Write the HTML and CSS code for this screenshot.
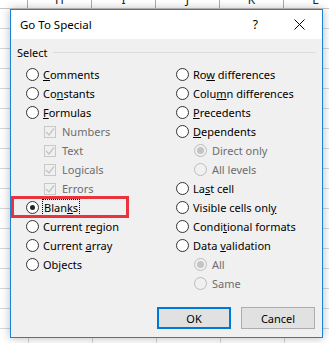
FILE: index.html
```html
<!DOCTYPE html>
<html lang="en">
<head>
    <meta charset="UTF-8">
    <title>Go To Special</title>
    <link rel="stylesheet" href="styles.css">
</head>
<body>
    <div class="sheet-head">
        <span>G</span><span>H</span><span>I</span><span>J</span><span>K</span><span>L</span>
    </div>
    <div class="dialog">
        <div class="titlebar">
            <span class="title">Go To Special</span>
            <span class="help">?</span>
            <svg class="close" width="11" height="11" viewBox="0 0 11 11"><path d="M0.5 0.5 L10.5 10.5 M10.5 0.5 L0.5 10.5" stroke="#000" stroke-width="1" fill="none"/></svg>
        </div>
        <div class="content">
            <div class="group-label"><span>Select</span><i></i></div>
            <div class="options">
                <div class="col">
                    <div class="opt"><b class="radio"></b><span><u>C</u>omments</span></div>
                    <div class="opt"><b class="radio"></b><span>Co<u>n</u>stants</span></div>
                    <div class="opt"><b class="radio"></b><span><u>F</u>ormulas</span></div>
                    <div class="opt sub off"><b class="check"><svg width="10" height="10" viewBox="0 0 10 10"><path d="M1 5 L4 8 L9 1.5" stroke="#c4c4c4" stroke-width="1.3" fill="none"/></svg></b><span>Numbers</span></div>
                    <div class="opt sub off"><b class="check"><svg width="10" height="10" viewBox="0 0 10 10"><path d="M1 5 L4 8 L9 1.5" stroke="#c4c4c4" stroke-width="1.3" fill="none"/></svg></b><span>Text</span></div>
                    <div class="opt sub off"><b class="check"><svg width="10" height="10" viewBox="0 0 10 10"><path d="M1 5 L4 8 L9 1.5" stroke="#c4c4c4" stroke-width="1.3" fill="none"/></svg></b><span>Logicals</span></div>
                    <div class="opt sub off"><b class="check"><svg width="10" height="10" viewBox="0 0 10 10"><path d="M1 5 L4 8 L9 1.5" stroke="#c4c4c4" stroke-width="1.3" fill="none"/></svg></b><span>Errors</span></div>
                    <div class="opt blanks"><b class="radio on"></b><span class="focus">Blan<u>k</u>s</span></div>
                    <div class="opt"><b class="radio"></b><span>Current <u>r</u>egion</span></div>
                    <div class="opt"><b class="radio"></b><span>Current <u>a</u>rray</span></div>
                    <div class="opt"><b class="radio"></b><span>Ob<u>j</u>ects</span></div>
                </div>
                <div class="col">
                    <div class="opt"><b class="radio"></b><span>Ro<u>w</u> differences</span></div>
                    <div class="opt"><b class="radio"></b><span>Colu<u>m</u>n differences</span></div>
                    <div class="opt"><b class="radio"></b><span><u>P</u>recedents</span></div>
                    <div class="opt"><b class="radio"></b><span><u>D</u>ependents</span></div>
                    <div class="opt sub off"><b class="radio on"></b><span>Direct only</span></div>
                    <div class="opt sub off"><b class="radio"></b><span>All levels</span></div>
                    <div class="opt"><b class="radio"></b><span>La<u>s</u>t cell</span></div>
                    <div class="opt"><b class="radio"></b><span>Visible cells onl<u>y</u></span></div>
                    <div class="opt"><b class="radio"></b><span>Condi<u>t</u>ional formats</span></div>
                    <div class="opt"><b class="radio"></b><span>Data <u>v</u>alidation</span></div>
                    <div class="opt sub off"><b class="radio on"></b><span>All</span></div>
                    <div class="opt sub off"><b class="radio"></b><span>Same</span></div>
                </div>
            </div>
            <div class="buttons">
                <button class="btn default">OK</button>
                <button class="btn">Cancel</button>
            </div>
        </div>
    </div>
</body>
</html>
```

FILE: styles.css
```css
body {
    margin: 0;
    width: 329px;
    height: 343px;
    overflow: hidden;
    font-family: "Noto Sans", "Liberation Sans", sans-serif;
    font-size: 11px;
    color: #000;
    background-color: #fff;
    background-image:
        linear-gradient(to right, transparent 28px, #d6d6d6 28px, #d6d6d6 29px, transparent 29px),
        linear-gradient(to bottom, transparent 8px, #d6d6d6 8px, #d6d6d6 9px, transparent 9px);
    background-size: 64px 100%, 100% 20px;
    background-position: 0 0, 0 0;
}

.sheet-head { display: flex; height: 8px; margin-left: -36px; overflow: hidden; border-bottom: 1px solid #c6c6c6; background: #fff; }
.sheet-head span { flex: 0 0 63px; border-right: 1px solid #ababab; text-align: center; font-size: 12px; line-height: 1; margin-top: -6px; color: #222; }

.dialog { position: relative; width: 311px; height: 327px; margin-left: 10px; border: 1px solid #1883d7; background: #f0f0f0; box-shadow: 0 0 9px rgba(0,0,0,0.28); }

.titlebar { display: flex; align-items: center; height: 29px; background: #fff; padding-left: 9px; }
.title { flex: 1; font-size: 11.5px; }
.help { font-size: 12px; margin-right: 36px; }
.close { margin-right: 17px; }

.content { padding: 6px 6px 0 6px; }
.group-label { display: flex; align-items: center; height: 15px; }
.group-label i { flex: 1; height: 1px; background: #dcdcdc; margin-left: 5px; }

.options { display: flex; padding-left: 9px; margin-top: 5px; }
.col { flex: 0 0 150px; }
.col + .col { flex: 1; }
.opt { display: flex; align-items: center; height: 19px; }
.opt span { margin-left: 4px; }
.opt.sub { padding-left: 18px; }
.opt.off span { color: #6d6d6d; margin-left: 5px; }

.radio { display: block; flex: none; width: 11px; height: 11px; border: 1px solid #333; border-radius: 50%; background: #fff; position: relative; }
.radio.on::after { content: ""; position: absolute; left: 3px; top: 3px; width: 5px; height: 5px; border-radius: 50%; background: #222; }
.off .radio { border-color: #bcbcbc; background: #f0f0f0; }
.off .radio.on::after { background: #c4c4c4; left: 2px; top: 2px; width: 7px; height: 7px; }

.check { display: flex; flex: none; align-items: center; justify-content: center; width: 10px; height: 10px; border: 1px solid #c8c8c8; background: #f0f0f0; }
.off .check + span { margin-left: 6px; }

.focus { outline: 1px dotted #000; outline-offset: 0; padding: 0 1px; }
.blanks::before { content: ""; position: absolute; left: 0; top: 186px; width: 112px; height: 16px; border: 3px solid #e8343c; }

.buttons { display: flex; justify-content: flex-end; gap: 10px; margin-top: 14px; padding-right: 1px; }
.btn { width: 74px; height: 22px; font-family: inherit; font-size: 11px; background: #e1e1e1; border: 1px solid #adadad; padding: 0; color: #000; }
.btn.default { border: 2px solid #0078d7; }
```
